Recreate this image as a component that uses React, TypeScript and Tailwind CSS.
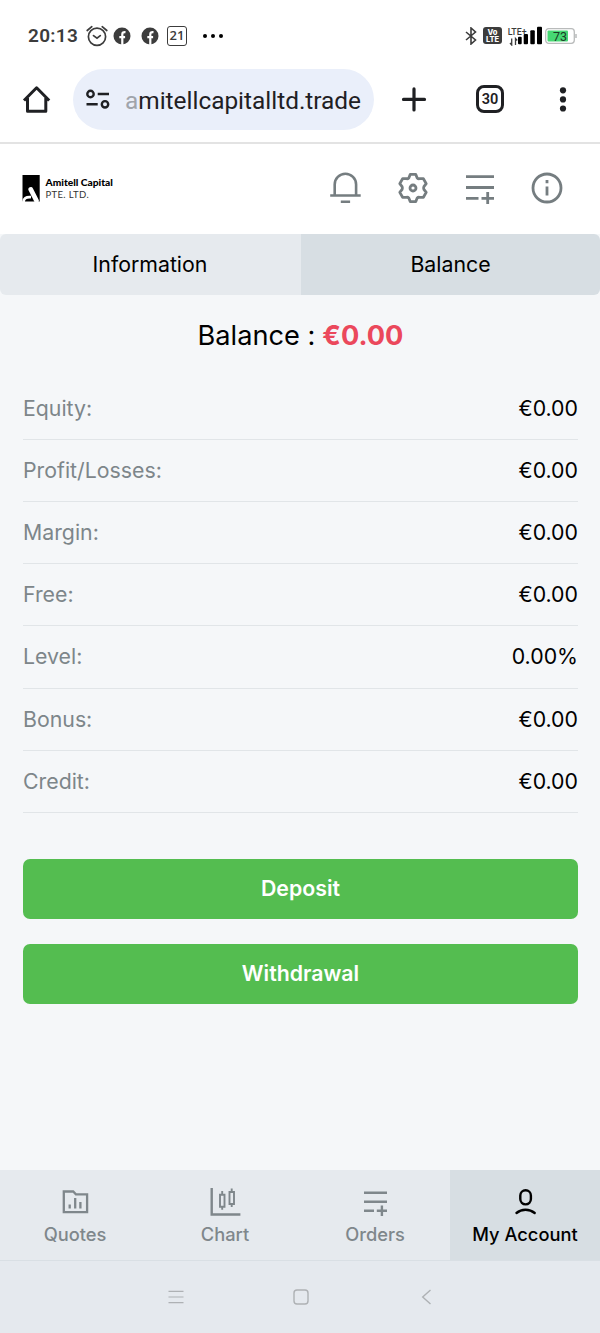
import type { ReactNode } from "react";
import clsx from "clsx";

const rows = [
    { label: "Equity:", value: "€0.00" },
    { label: "Profit/Losses:", value: "€0.00" },
    { label: "Margin:", value: "€0.00" },
    { label: "Free:", value: "€0.00" },
    { label: "Level:", value: "0.00%" },
    { label: "Bonus:", value: "€0.00" },
    { label: "Credit:", value: "€0.00" },
];

export default function App() {
    return (
        <div className="flex h-[1333px] w-[600px] flex-col overflow-hidden bg-[#f5f7f9] font-['Inter',sans-serif] text-black">
            <StatusBar />
            <BrowserBar />
            <Header />

            <div className="flex h-[61px] shrink-0 overflow-hidden rounded-md text-[21.3px]">
                <button className="w-[301px] bg-[#e6eaee] pr-px">Information</button>
                <button className="flex-1 bg-[#d7dee3]">Balance</button>
            </div>

            <main className="flex flex-1 flex-col pr-[22px] pl-[23px]">
                <h1 className="flex h-[82.6px] items-center justify-center gap-[7px] pt-px text-[27.2px]">
                    <span>Balance :</span>
                    <span className="font-bold text-[#eb485c]">€0.00</span>
                </h1>
                {rows.map((row) => (
                    <div key={row.label} className="flex h-[62.2px] items-center justify-between border-b border-[#e1e5e8] pt-px text-[21.3px]">
                        <span className="text-[#7d868a]">{row.label}</span>
                        <span>{row.value}</span>
                    </div>
                ))}
                <div className="mt-[46px] flex flex-col gap-[25px] text-[21.3px] font-semibold text-white">
                    <button className="h-[60px] rounded-[7px] bg-[#54bd50]">Deposit</button>
                    <button className="h-[60px] rounded-[7px] bg-[#54bd50]">Withdrawal</button>
                </div>
            </main>

            <BottomNav />
            <SystemNav />
        </div>
    );
}

function StatusBar() {
    return (
        <div className="flex h-[60px] shrink-0 items-center bg-white pt-3 pr-[22px] pb-[1px] pl-7 text-[#3c3c3c]">
            <span className="w-[57px] pt-[2px] font-['Roboto',sans-serif] text-[19px] font-semibold tracking-[0.3px]">20:13</span>
            <svg className="h-6 w-6" viewBox="0 0 24 24" fill="none" stroke="currentColor" strokeWidth="1.7" strokeLinecap="round">
                <circle cx="12" cy="12.8" r="8.6" />
                <path d="M8.5 11.6l3.5 2.6 3.3-2.6M2.2 6.5l4.6-3.8M21.8 6.5l-4.6-3.8" />
            </svg>
            <FacebookIcon className="ml-1" />
            <FacebookIcon className="ml-2.5" />
            <span className="ml-2 flex h-5 w-5 items-center justify-center rounded-[3px] border-[1.5px] border-current font-['Open_Sans',sans-serif] text-[13px] font-semibold">21</span>
            <span className="ml-4 flex gap-1 text-black">
                <i className="h-1 w-1 rounded-full bg-current" />
                <i className="h-1 w-1 rounded-full bg-current" />
                <i className="h-1 w-1 rounded-full bg-current" />
            </span>

            <div className="ml-auto flex items-center">
                <svg className="h-[18px] w-3" viewBox="0 0 12 18" fill="none" stroke="currentColor" strokeWidth="1.6">
                    <path d="M1 5l9.5 8L6 17V1l4.5 4L1 13" />
                </svg>
                <span className="ml-[6px] flex h-[17px] w-[19px] flex-col items-center justify-center rounded-[3px] bg-[#3c3c3c] text-[7.5px] leading-[7px] font-extrabold text-white">
                    <span>Vo</span>
                    <span>LTE</span>
                </span>
                <svg className="ml-[5px] h-5 w-9" viewBox="507 24 36 20">
                    <text x="507.7" y="32.7" fontSize="8.8" fontWeight="500" fill="currentColor" fontFamily="Roboto, sans-serif">LTE+</text>
                    <path d="M511.7 36.5v6.5l-1.7-2M515.5 43v-6.5l1.7 2" fill="none" stroke="currentColor" strokeWidth="1.3" />
                    <g fill="#000">
                        <rect x="518" y="34.7" width="3.7" height="7.6" rx="1" />
                        <rect x="523.7" y="32" width="4.3" height="10.3" rx="1" />
                        <rect x="530.3" y="28.3" width="4.5" height="14" rx="1" />
                        <rect x="537" y="24.7" width="5" height="17.6" rx="1" />
                    </g>
                </svg>
                <svg className="ml-[2px] h-4 w-[33px]" viewBox="0 0 33 16">
                    <rect x=".7" y=".7" width="28.6" height="14.6" rx="3" fill="#fff" stroke="#b9bbbb" strokeWidth="1.3" />
                    <rect x="2.5" y="2.5" width="20.5" height="11" rx="1" fill="#46d873" />
                    <path d="M31 6v4" stroke="#b9bbbb" strokeWidth="1.5" />
                    <text x="15" y="12.5" textAnchor="middle" fontSize="12.5" fill="#1d3a27" fontFamily="Roboto, sans-serif">73</text>
                </svg>
            </div>
        </div>
    );
}

function FacebookIcon({ className }: { className: string }) {
    return (
        <svg className={clsx("h-[18px] w-[18px]", className)} viewBox="0 0 18 18">
            <circle cx="9" cy="9" r="8.5" fill="currentColor" />
            <path d="M9.3 18v-6.3M6.3 10.2h5.8M9.3 12V7.3c0-1.7 1-2.3 3.2-2.1" fill="none" stroke="#fff" strokeWidth="2.2" />
        </svg>
    );
}

function BrowserBar() {
    return (
        <div className="flex h-[84px] shrink-0 items-center border-b-2 border-[#e3e3e3] bg-white pb-1 pl-[22px] text-[#1f2023]">
            <svg className="h-[30px] w-[30px]" viewBox="0 0 30 30" fill="none" stroke="currentColor" strokeWidth="3" strokeLinejoin="round">
                <path d="M2 16.5L14.6 3.8l12.6 12.7M5.5 14v13.3h18.3V14" />
            </svg>
            <div className="ml-[21px] flex h-[61px] w-[301px] items-center rounded-full bg-[#eaeffa] pl-[12px]">
                <svg className="h-5 w-[26px]" viewBox="0 0 26 20" fill="none" stroke="currentColor" strokeWidth="2.4">
                    <circle cx="5.5" cy="5" r="3.2" />
                    <path d="M12.7 5H24M1.5 15.3h11.2" />
                    <circle cx="20" cy="15.3" r="3.2" />
                </svg>
                <span className="ml-[14px] pt-[4px] font-['Roboto',sans-serif] text-[24.4px]">
                    <span className="text-[#a0a4ab]">a</span>mitellcapitalltd.trade
                </span>
            </div>
            <svg className="ml-[27px] h-[26px] w-[26px]" viewBox="0 0 26 26" stroke="currentColor" strokeWidth="3.2" strokeLinecap="round">
                <path d="M13 2.9v21M2.5 13.4h21" />
            </svg>
            <span className="ml-[49px] flex h-7 w-7 items-center justify-center rounded-[8px] border-[3px] border-current pt-px font-['Roboto',sans-serif] text-[14.5px] font-semibold">30</span>
            <svg className="ml-[55px] h-7 w-2" viewBox="0 0 8 28" fill="currentColor">
                <circle cx="4" cy="5.3" r="3.1" />
                <circle cx="4" cy="14.4" r="3.1" />
                <circle cx="4" cy="23.5" r="3.1" />
            </svg>
        </div>
    );
}

function Header() {
    return (
        <header className="flex h-[90px] shrink-0 items-center justify-between bg-white pr-[37px] pb-[2px] pl-[22px]">
            <div className="flex items-center font-['Lato',sans-serif]">
                <svg className="h-7 w-[18px]" viewBox="0 0 18 28" fill="none" stroke="#fff">
                    <path d="M.5 1h17.2v26.5H.5z" fill="#000" stroke="none" />
                    <path d="M8.8 15.5l5.6 11" strokeWidth="4.8" strokeLinecap="round" />
                    <path d="M1.5 28.5c0-4 2.5-5.8 7.5-5.3" strokeWidth="2.8" />
                </svg>
                <div className="ml-[5.5px] flex flex-col">
                    <span className="text-[10.2px] leading-[12px] font-black whitespace-nowrap">Amitell Capital</span>
                    <span className="pt-px text-[9.5px] leading-[12px] tracking-[0.35px] text-[#333]">PTE. LTD.</span>
                </div>
            </div>
            <div className="flex items-center gap-[35px] text-[#757d80]">
                <svg className="h-8 w-8" viewBox="0 0 32 32" fill="none" stroke="currentColor" strokeWidth="2.6">
                    <path d="M.2 23.5h30.5M4.7 23.5V12.5a10.7 10.7 0 0 1 21.4 0v11M10.8 29.8h9.3" />
                </svg>
                <svg className="h-8 w-8" viewBox="-16 -16 32 32" fill="none" stroke="currentColor" strokeWidth="2.8" strokeLinejoin="round">
                    <path d="M-2.8 -13.6H2.8L4.2 -10Q5.2 -9 6.6 -9.3L10.4 -9.3L13.2 -4.4L10.9 -1.3Q10.3 0 10.9 1.3L13.2 4.4L10.4 9.3L6.6 9.3Q5.2 9 4.2 10L2.8 13.6H-2.8L-4.2 10Q-5.2 9 -6.6 9.3L-10.4 9.3L-13.2 4.4L-10.9 1.3Q-10.3 0 -10.9 -1.3L-13.2 -4.4L-10.4 -9.3L-6.6 -9.3Q-5.2 -9 -4.2 -10Z" />
                    <circle r="3" />
                </svg>
                <svg className="h-8 w-8" viewBox="0 0 32 32" fill="none" stroke="currentColor" strokeWidth="2.8">
                    <path d="M2 4.7h28M2 15.5h28M2 26.3h12.5M17.5 26.3H30M23.7 20v12" />
                </svg>
                <svg className="h-8 w-8" viewBox="-16 -16 32 32" fill="none" stroke="currentColor" strokeWidth="2.8">
                    <circle r="14" />
                    <path d="M0 -8v3.2M0 -1.5v9" />
                </svg>
            </div>
        </header>
    );
}

function NavItem({ label, active, children }: { label: string; active?: boolean; children: ReactNode }) {
    return (
        <button
            className={clsx(
                "flex flex-1 basis-0 flex-col items-center pt-4 text-[18.3px] font-medium whitespace-nowrap",
                active ? "bg-[#d7dee3] text-black" : "text-[#7f878b]"
            )}
        >
            {children}
            <span className="mt-[3px] leading-[26px]">{label}</span>
        </button>
    );
}

function BottomNav() {
    return (
        <nav className="flex h-[91px] shrink-0 border-b border-[#d9dfe4] bg-[#e6eaee]">
            <NavItem label="Quotes">
                <svg className="h-8 w-8" viewBox="59 1186 32 32" fill="none" stroke="currentColor" strokeWidth="2.3">
                    <path d="M63.8 1191.5h9.4l2.7 2.8h11.2v17.9H63.8z" />
                    <path d="M69.7 1204.5v4M75.2 1198v10.5M80.4 1202v6.5" />
                </svg>
            </NavItem>
            <NavItem label="Chart">
                <svg className="h-8 w-8" viewBox="209 1186 32 32" fill="none" stroke="currentColor" strokeWidth="2.4">
                    <path d="M211.7 1188v26.5h28.7" />
                    <path d="M220 1194.7h4.5v12H220zM229.5 1192h4.5v12h-4.5zM222.2 1191v3.5M222.2 1206.7v3M231.7 1188.5v3.5M231.7 1204v3" strokeWidth="1.9" />
                </svg>
            </NavItem>
            <NavItem label="Orders">
                <svg className="h-8 w-8" viewBox="359 1186 32 32" fill="none" stroke="currentColor" strokeWidth="2.4">
                    <path d="M364 1192.8h23M364 1201.7h23M364 1210.8h10M376.8 1210.8H387M381.9 1205.6v10.4" />
                </svg>
            </NavItem>
            <NavItem label="My Account" active>
                <svg className="h-8 w-8" viewBox="509 1186 32 32" fill="none" stroke="currentColor" strokeWidth="2.4" strokeLinecap="round">
                    <rect x="520.3" y="1190.2" width="10.6" height="14.2" rx="5.3" />
                    <path d="M516.5 1213c5-4.3 13-4.3 18.2 0" />
                </svg>
            </NavItem>
        </nav>
    );
}

function SystemNav() {
    return (
        <div className="flex h-[72px] shrink-0 items-center justify-center gap-[109px] bg-[#e5e9ee] pl-px text-[#aeb1b4]">
            <svg className="h-4 w-4" viewBox="0 0 16 16" stroke="currentColor" strokeWidth="1.2">
                <path d="M.5 2.3h15M.5 8h15M.5 13.7h15" />
            </svg>
            <svg className="h-4 w-4" viewBox="0 0 16 16" fill="none" stroke="currentColor" strokeWidth="1.4">
                <rect x="1" y="1" width="14" height="14" rx="3" />
            </svg>
            <svg className="h-4 w-4" viewBox="0 0 16 16" fill="none" stroke="currentColor" strokeWidth="1.4">
                <path d="M12.5 1L4.7 8l7.8 7" />
            </svg>
        </div>
    );
}
